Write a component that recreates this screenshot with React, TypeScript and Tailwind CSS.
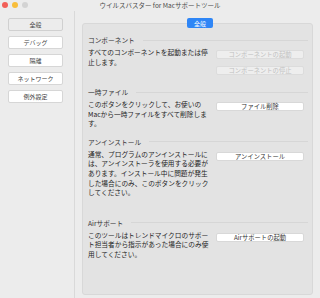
const FONT = "font-['Hiragino_Sans','Noto_Sans_CJK_JP',sans-serif]";

type Btn = { label: string; disabled?: boolean };

const sideItems = ["全般", "デバッグ", "隔離", "ネットワーク", "例外設定"];

function Section({
  title,
  text,
  buttons,
  className,
}: {
  title: string;
  text: string;
  buttons: Btn[];
  className?: string;
}) {
  return (
    <div className={className}>
      <div className="flex items-center gap-2 h-[10px]">
        <span className="text-[6.7px] leading-[10px] text-[#333]">{title}</span>
        <div className="flex-1 h-px bg-[#d6d6d6]" />
      </div>
      <div className="flex mt-[3px]">
        <p className="w-[123px] text-[6.7px] leading-[9.6px] text-[#1e1e1e]">{text}</p>
        <div className="ml-[5px] mt-[2px] flex flex-col gap-[7px]">
          {buttons.map((b) => (
            <div
              key={b.label}
              className={
                b.disabled
                  ? "w-[88px] h-[9px] flex items-center justify-center whitespace-nowrap text-[6.3px] rounded-[2px] bg-[#eeeeee] border border-[#dcdcdc] text-[#c0c0c0]"
                  : "w-[88px] h-[9px] flex items-center justify-center whitespace-nowrap text-[6.3px] rounded-[2px] bg-white border border-[#d8d8d8] text-[#333]"
              }
            >
              {b.label}
            </div>
          ))}
        </div>
      </div>
    </div>
  );
}

export default function App() {
  return (
    <div className={`w-[320px] h-[298px] bg-[#ececec] flex flex-col overflow-hidden ${FONT}`}>
      {/* タイトルバー */}
      <div className="relative h-[11px] flex items-center justify-center">
        <div className="absolute left-[2px] top-[2px] flex gap-[4px]">
          <span className="w-[6px] h-[6px] rounded-full bg-[#f25f58]" />
          <span className="w-[6px] h-[6px] rounded-full bg-[#f8be3b]" />
          <span className="w-[6px] h-[6px] rounded-full bg-[#d3d3d3]" />
        </div>
        <span className="text-[6.5px] text-[#4a4a4a]">ウイルスバスター for Macサポートツール</span>
      </div>

      <div className="flex flex-1">
        {/* サイドバー */}
        <div className="w-[75px] border-r border-[#d9d9d9] pt-[7px] pl-[8px] flex flex-col gap-[5px]">
          {sideItems.map((item, i) => (
            <div
              key={item}
              className={
                i === 0
                  ? "w-[55px] h-[13px] flex items-center justify-center text-[6px] text-[#444] rounded-[2px] bg-[#ececec] border border-[#d0d0d0]"
                  : "w-[55px] h-[13px] flex items-center justify-center text-[6px] text-[#444] rounded-[2px] bg-white border border-[#d6d6d6]"
              }
            >
              {item}
            </div>
          ))}
        </div>

        {/* メイン */}
        <div className="flex-1 pl-[7px] pr-[7px] pt-[12px] pb-[3px]">
          <div className="relative h-full bg-[#e3e3e3] border border-[#d8d8d8] rounded-[3px] pl-[5px] pr-[4px] pt-[11px]">
            <div className="absolute -top-[6px] left-[104px] w-[26px] h-[10px] rounded-[2px] bg-[#2f86f6] flex items-center justify-center text-[6px] text-white">
              全般
            </div>

            <Section
              title="コンポーネント"
              text="すべてのコンポーネントを起動または停止します。"
              buttons={[
                { label: "コンポーネントの起動", disabled: true },
                { label: "コンポーネントの停止", disabled: true },
              ]}
            />
            <Section
              className="mt-[12px]"
              title="一時ファイル"
              text="このボタンをクリックして、お使いのMacから一時ファイルをすべて削除します。"
              buttons={[{ label: "ファイル削除" }]}
            />
            <Section
              className="mt-[8px]"
              title="アンインストール"
              text="通常、プログラムのアンインストールには、アンインストーラを使用する必要があります。インストール中に問題が発生した場合にのみ、このボタンをクリックしてください。"
              buttons={[{ label: "アンインストール" }]}
            />
            <Section
              className="mt-[20px]"
              title="Airサポート"
              text="このツールはトレンドマイクロのサポート担当者から指示があった場合にのみ使用してください。"
              buttons={[{ label: "Airサポートの起動" }]}
            />
          </div>
        </div>
      </div>
    </div>
  );
}
